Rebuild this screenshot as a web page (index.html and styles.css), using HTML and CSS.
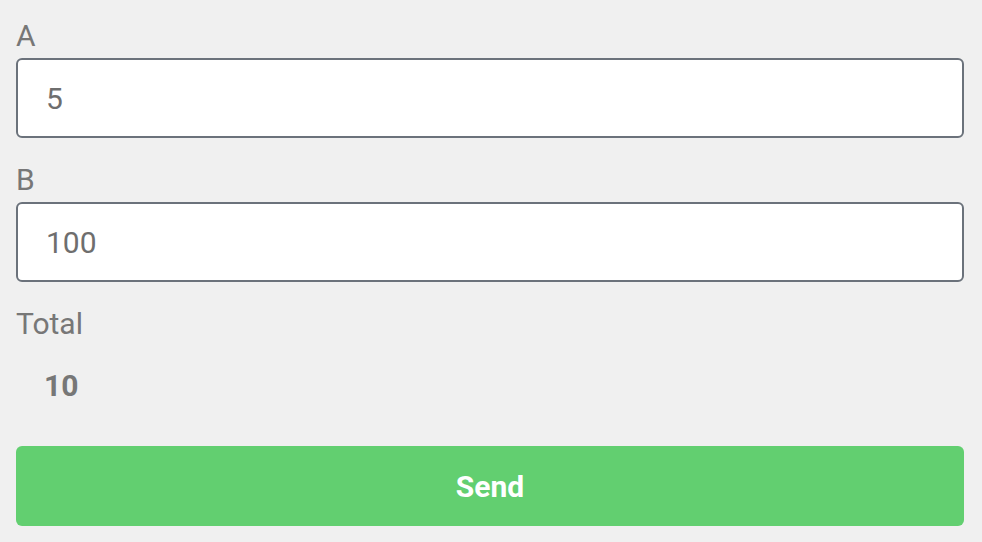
FILE: index.html
```html
<!DOCTYPE html>
<html>
<head>
<meta charset="utf-8">
<link rel="stylesheet" href="styles.css">
</head>
<body>
<form class="form">
  <div class="field">
    <label class="label">A</label>
    <input class="input" type="text" value="5">
  </div>
  <div class="field">
    <label class="label">B</label>
    <input class="input" type="text" value="100">
  </div>
  <div class="field field-total">
    <span class="label">Total</span>
    <div class="total">10</div>
  </div>
  <button class="send" type="button">Send</button>
</form>
</body>
</html>
```
FILE: styles.css
```css
html, body {
  margin: 0;
  padding: 0;
  background: #f0f0f0;
}
body {
  font-family: Roboto, "Noto Sans", sans-serif;
  padding: 18px 18px 0 16px;
}
.form {
  display: flex;
  flex-direction: column;
}
.field {
  display: flex;
  flex-direction: column;
  gap: 4px;
  margin-bottom: 24px;
}
.label {
  font-size: 30px;
  line-height: 36px;
  color: #777777;
}
.input {
  box-sizing: border-box;
  height: 80px;
  width: 100%;
  margin: 0;
  border: 2px solid #6b727b;
  border-radius: 6px;
  background: #ffffff;
  padding: 0 28px;
  font-family: Roboto, sans-serif;
  font-size: 30px;
  color: #6e6e6e;
  outline: none;
}
.total {
  height: 78px;
  display: flex;
  align-items: center;
  padding: 0 28px;
  font-size: 30px;
  font-weight: 700;
  color: #777777;
}
.field-total {
  margin-bottom: 22px;
}
.send {
  height: 80px;
  width: 100%;
  border: none;
  border-radius: 6px;
  background: #62cf70;
  color: #ffffff;
  font-family: Roboto, sans-serif;
  font-size: 30px;
  font-weight: 700;
  cursor: pointer;
}
```
